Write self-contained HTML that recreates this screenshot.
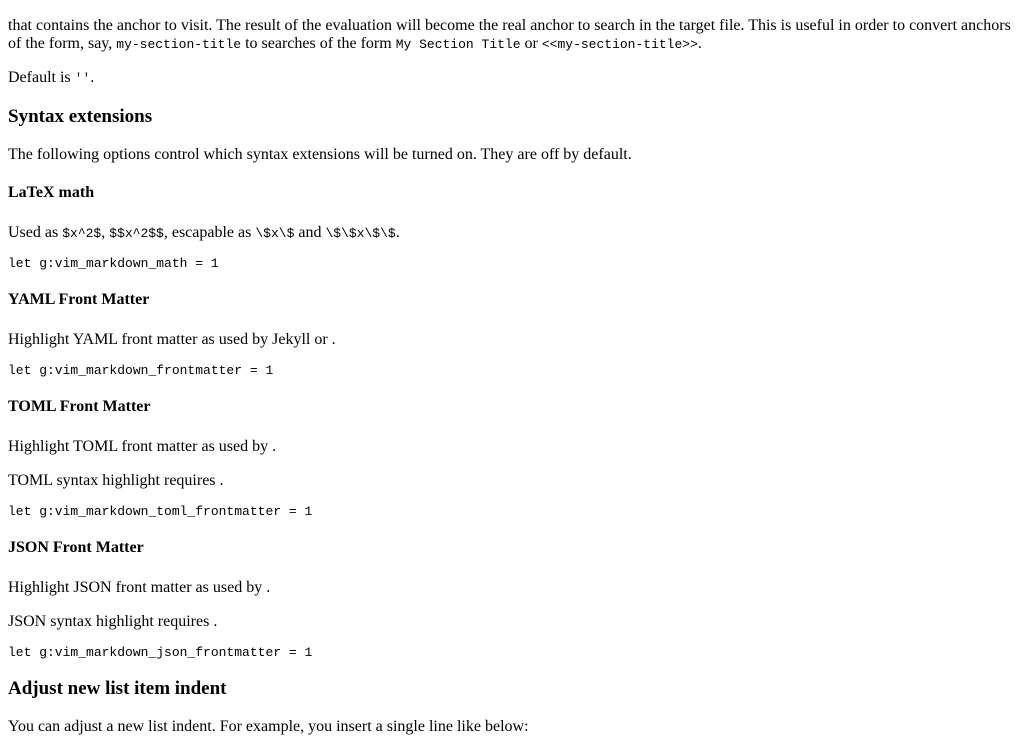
<!DOCTYPE html>
<html><head><meta charset="utf-8"><style>
body{margin:8px;font-family:"Liberation Serif",serif;font-size:16px;color:#000;background:#fff;line-height:18px;}
p{margin:16px 0;line-height:18px;}
p.first{margin-top:17px;}
code{font-family:"Liberation Mono",monospace;font-size:13px;line-height:1;}
pre{font-family:"Liberation Mono",monospace;font-size:13px;margin:13px 0 22px;line-height:11px;}
h2{font-size:19px;margin:18px 0;line-height:22px;}
h4{font-size:16px;margin:20px 0 22px;line-height:18px;}
</style></head><body>
<p class="first">that contains the anchor to visit. The result of the evaluation will become the real anchor to search in the target file. This is useful in order to convert anchors of the form, say, <code>my-section-title</code> to searches of the form <code>My Section Title</code> or <code>&lt;&lt;my-section-title&gt;&gt;</code>.</p>
<p>Default is <code>''</code>.</p>
<h2 style="margin-top:19px">Syntax extensions</h2>
<p>The following options control which syntax extensions will be turned on. They are off by default.</p>
<h4>LaTeX math</h4>
<p>Used as <code>$x^2$</code>, <code>$$x^2$$</code>, escapable as <code>\$x\$</code> and <code>\$\$x\$\$</code>.</p>
<pre>let g:vim_markdown_math = 1</pre>
<h4>YAML Front Matter</h4>
<p>Highlight YAML front matter as used by Jekyll or .</p>
<pre>let g:vim_markdown_frontmatter = 1</pre>
<h4>TOML Front Matter</h4>
<p>Highlight TOML front matter as used by .</p>
<p>TOML syntax highlight requires .</p>
<pre>let g:vim_markdown_toml_frontmatter = 1</pre>
<h4>JSON Front Matter</h4>
<p>Highlight JSON front matter as used by .</p>
<p>JSON syntax highlight requires .</p>
<pre style="margin-bottom:20px">let g:vim_markdown_json_frontmatter = 1</pre>
<h2>Adjust new list item indent</h2>
<p>You can adjust a new list indent. For example, you insert a single line like below:</p>
</body></html>
